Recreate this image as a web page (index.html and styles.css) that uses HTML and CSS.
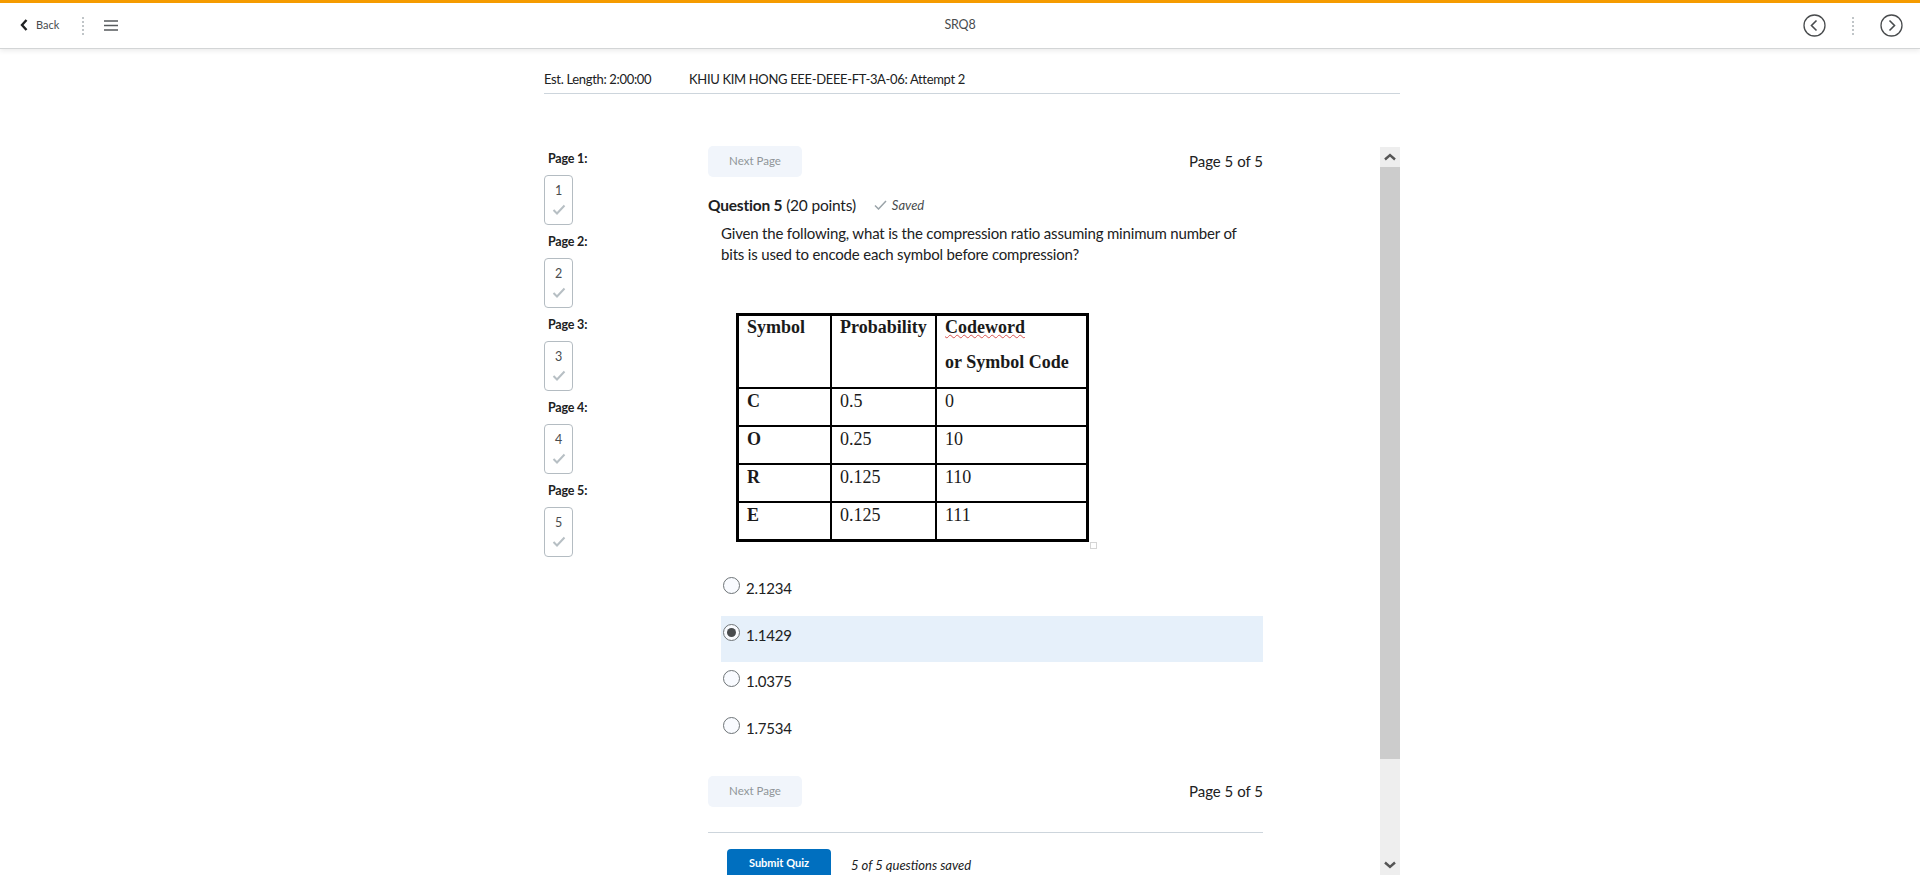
FILE: index.html
```html
<!DOCTYPE html>
<html><head><title>SRQ8</title>
<meta charset="utf-8">
<link rel="stylesheet" href="styles.css">
</head>
<body>
<div id="topbar">
	<div class="bar-left">
		<svg class="back-icon" width="10" height="14" viewBox="0 0 10 14"><path d="M7.5 2 L3 7 L7.5 12" fill="none" stroke="#202122" stroke-width="2.4"/></svg>
		<span class="back-text">Back</span>
		<span class="dots"></span>
		<svg class="menu-icon" width="14" height="11" viewBox="0 0 14 11"><path d="M0 1 H14 M0 5.5 H14 M0 10 H14" stroke="#565a5c" stroke-width="1.5"/></svg>
	</div>
	<div class="bar-title">SRQ8</div>
	<div class="bar-right">
		<svg width="23" height="23" viewBox="0 0 23 23"><circle cx="11.5" cy="11.5" r="10.5" fill="none" stroke="#494c4e" stroke-width="1.3"/><path d="M13.5 6.5 L8.5 11.5 L13.5 16.5" fill="none" stroke="#494c4e" stroke-width="1.6"/></svg>
		<span class="dots"></span>
		<svg width="23" height="23" viewBox="0 0 23 23"><circle cx="11.5" cy="11.5" r="10.5" fill="none" stroke="#494c4e" stroke-width="1.3"/><path d="M9.5 6.5 L14.5 11.5 L9.5 16.5" fill="none" stroke="#494c4e" stroke-width="1.6"/></svg>
	</div>
</div>

<div id="quiz">
	<div class="quizhead">
		<span class="est">Est. Length: 2:00:00</span>
		<span>KHIU KIM HONG EEE-DEEE-FT-3A-06: Attempt 2</span>
	</div>
	<div class="quizbody">
		<div class="pagenav">
			<div class="pagelabel">Page 1:</div>
			<div class="pagebox">1<svg class="tick" width="14" height="11" viewBox="0 0 14 11"><path d="M1.5 6 L5 9.5 L12.5 1.5" fill="none" stroke="#b7bfc4" stroke-width="2"/></svg></div>
			<div class="pagelabel">Page 2:</div>
			<div class="pagebox">2<svg class="tick" width="14" height="11" viewBox="0 0 14 11"><path d="M1.5 6 L5 9.5 L12.5 1.5" fill="none" stroke="#b7bfc4" stroke-width="2"/></svg></div>
			<div class="pagelabel">Page 3:</div>
			<div class="pagebox">3<svg class="tick" width="14" height="11" viewBox="0 0 14 11"><path d="M1.5 6 L5 9.5 L12.5 1.5" fill="none" stroke="#b7bfc4" stroke-width="2"/></svg></div>
			<div class="pagelabel">Page 4:</div>
			<div class="pagebox">4<svg class="tick" width="14" height="11" viewBox="0 0 14 11"><path d="M1.5 6 L5 9.5 L12.5 1.5" fill="none" stroke="#b7bfc4" stroke-width="2"/></svg></div>
			<div class="pagelabel">Page 5:</div>
			<div class="pagebox">5<svg class="tick" width="14" height="11" viewBox="0 0 14 11"><path d="M1.5 6 L5 9.5 L12.5 1.5" fill="none" stroke="#b7bfc4" stroke-width="2"/></svg></div>
		</div>

		<div class="content">
			<div class="pagerow">
				<span class="nextbtn">Next Page</span>
				<span>Page 5 of 5</span>
			</div>
			<div class="qhead">
				<span class="qtitle"><b>Question 5</b> (20 points)</span>
				<svg class="savedtick" width="13" height="10" viewBox="0 0 13 10"><path d="M1 5.5 L4.5 9 L12 1" fill="none" stroke="#9aa3a8" stroke-width="1.5"/></svg>
				<i class="saved">Saved</i>
			</div>
			<p class="qtext">Given the following, what is the compression ratio assuming minimum number of bits is used to encode each symbol before compression?</p>

			<div class="tablebox">
				<table class="symbols">
					<tr class="r-head"><th class="c1"><div class="headcell">Symbol</div></th><th class="c2"><div class="headcell">Probability</div></th><th><div class="headcell"><span class="wavy">Codeword</span><br>or Symbol Code</div></th></tr>
					<tr><th>C</th><td>0.5</td><td>0</td></tr>
					<tr><th>O</th><td>0.25</td><td>10</td></tr>
					<tr><th>R</th><td>0.125</td><td>110</td></tr>
					<tr><th>E</th><td>0.125</td><td>111</td></tr>
				</table>
				<span class="handle"></span>
			</div>

			<div class="answers">
				<div class="answer"><span class="radio"></span>2.1234</div>
				<div class="answer picked"><span class="radio on"></span>1.1429</div>
				<div class="answer"><span class="radio"></span>1.0375</div>
				<div class="answer"><span class="radio"></span>1.7534</div>
			</div>

			<div class="pagerow lower">
				<span class="nextbtn">Next Page</span>
				<span>Page 5 of 5</span>
			</div>
			<div class="submitrow">
				<span class="submitbtn">Submit Quiz</span>
				<i class="savedcount">5 of 5 questions saved</i>
			</div>
		</div>

		<div class="scrollbar">
			<div class="arrow"><svg width="12" height="8" viewBox="0 0 12 8"><path d="M1 6.5 L6 2 L11 6.5" fill="none" stroke="#555" stroke-width="2.4"/></svg></div>
			<div class="thumb"></div>
			<div class="track"></div>
			<div class="arrow"><svg width="12" height="8" viewBox="0 0 12 8"><path d="M1 1.5 L6 6 L11 1.5" fill="none" stroke="#555" stroke-width="2.4"/></svg></div>
		</div>
	</div>
</div>
</body></html>
```

FILE: styles.css
```css
html, body { margin: 0; padding: 0; height: 100%; }
body {
	font-family: Lato, "Open Sans", sans-serif;
	color: #202122;
	background: #fff;
	overflow: hidden;
}

#topbar {
	height: 45px;
	border-top: 3px solid #f59b00;
	border-bottom: 1px solid #d3d5d6;
	box-shadow: 0 2px 5px rgba(0,0,0,0.08);
	display: flex;
	align-items: center;
	justify-content: space-between;
	font-size: 11px;
	color: #494c4e;
}
.bar-left { display: flex; align-items: center; padding-left: 19px; width: 300px; box-sizing: border-box; }
.back-text { margin: -2px 0 0 7px; }
.back-icon { margin-top: -1px; }
.dots {
	display: inline-block;
	height: 18px;
	border-left: 2px dotted #c0c5c8;
	margin-left: 23px;
	margin-right: 20px;
}
.bar-title { font-size: 12.5px; letter-spacing: -0.2px; margin-top: -2px; }
.bar-right { display: flex; align-items: center; justify-content: flex-end; width: 300px; padding-right: 17px; box-sizing: border-box; }
.bar-right .dots { margin-left: 26px; margin-right: 26px; }

#quiz { margin-left: 544px; width: 856px; }
.quizhead {
	height: 29px;
	padding-top: 15px;
	border-bottom: 1px solid #cdd5dc;
	font-size: 13px;
	letter-spacing: -0.33px;
	line-height: 30px;
	display: flex;
}
.est { width: 145px; }

.quizbody {
	display: flex;
	height: 729px;
	margin-top: 52px;
	overflow: hidden;
}
.pagenav { width: 164px; flex: none; padding-top: 4px; }
.pagelabel {
	font-size: 12.5px;
	letter-spacing: -0.2px;
	font-weight: 700;
	padding-left: 4px;
	line-height: 18px;
	height: 25px;
}
.pagebox {
	width: 27px;
	height: 46px;
	padding-bottom: 2px;
	border: 1px solid #b4bcc2;
	border-radius: 4px;
	margin-bottom: 8px;
	font-size: 12.5px;
	line-height: 16px;
	color: #494c4e;
	display: flex;
	flex-direction: column;
	align-items: center;
	justify-content: center;
	gap: 5px;
}

.content { width: 555px; flex: none; font-size: 15px; }
.pagerow {
	display: flex;
	justify-content: space-between;
	align-items: flex-start;
	height: 31px;
	line-height: 30px;
}
.pagerow.lower { margin-top: 20px; padding-bottom: 25px; border-bottom: 1px solid #cdd5dc; }
.nextbtn {
	width: 94px;
	height: 31px;
	line-height: 30px;
	text-align: center;
	background: #f1f5fb;
	border-radius: 5px;
	font-size: 11.5px;
	color: #909599;
}
.qhead {
	display: flex;
	align-items: center;
	height: 24px;
	margin-top: 16px;
}
.qtitle { font-size: 15.5px; letter-spacing: -0.2px; }
.savedtick { margin-left: 18px; }
.saved { font-size: 13px; margin: -1px 0 0 5px; color: #494c4e; }
.qtext {
	margin: 6px 0 0 13px;
	width: 530px;
	line-height: 21px;
	font-size: 15px;
	letter-spacing: -0.18px;
}

.tablebox { position: relative; margin: 48px 0 0 28px; width: 353px; height: 229px; }
.symbols {
	border-collapse: collapse;
	width: 353px;
	height: 229px;
	table-layout: fixed;
	font-family: "Liberation Serif", serif;
	font-size: 18px;
	color: #1a1a1a;
	border: 3px solid #000;
}
.symbols th, .symbols td {
	border: 2px solid #000;
	text-align: left;
	vertical-align: top;
	padding: 1px 8px 0;
	font-weight: 400;
	line-height: 22px;
}
.symbols th { font-weight: 700; }
.symbols .c1 { width: 75px; }
.symbols .c2 { width: 87px; }
.symbols tr { height: 38px; }
.symbols .r-head { height: 73px; }
.symbols .r-head th { line-height: 35px; padding-top: 0; }
.headcell { margin-top: -6px; }
.wavy { text-decoration: underline wavy #d9534f 1px; }
.handle {
	position: absolute;
	right: -8px;
	bottom: -7px;
	width: 5px;
	height: 5px;
	border: 1px solid #d5d5d5;
}

.answers { margin: 27px 0 0 13px; }
.answer {
	height: 46.7px;
	display: flex;
	align-items: flex-start;
	padding-top: 8px;
	box-sizing: border-box;
	font-size: 15px;
	letter-spacing: -0.2px;
	line-height: 22px;
}
.answer.picked { background: #e6f0fa; }
.radio {
	width: 15px;
	height: 15px;
	border: 1px solid #6e7477;
	border-radius: 50%;
	background: #f9fbff;
	margin: 0 6px 0 2px;
	display: flex;
	align-items: center;
	justify-content: center;
	flex: none;
}
.radio.on::after {
	content: "";
	width: 9px;
	height: 9px;
	border-radius: 50%;
	background: #494c4e;
}

.submitrow { display: flex; align-items: flex-start; margin: 16px 0 0 19px; }
.submitbtn {
	width: 104px;
	height: 38px;
	line-height: 28px;
	text-align: center;
	background: #006fbf;
	color: #fff;
	font-size: 11px;
	font-weight: 700;
	border-radius: 4px;
}
.savedcount { font-size: 13px; margin: 8px 0 0 20px; }

.scrollbar {
	width: 20px;
	margin-top: 1px;
	margin-left: auto;
	display: flex;
	flex-direction: column;
	background: #eee;
}
.arrow { height: 20px; display: flex; align-items: center; justify-content: center; flex: none; }
.thumb { height: 592px; background: #ccc; flex: none; }
.track { flex: 1; }
```
